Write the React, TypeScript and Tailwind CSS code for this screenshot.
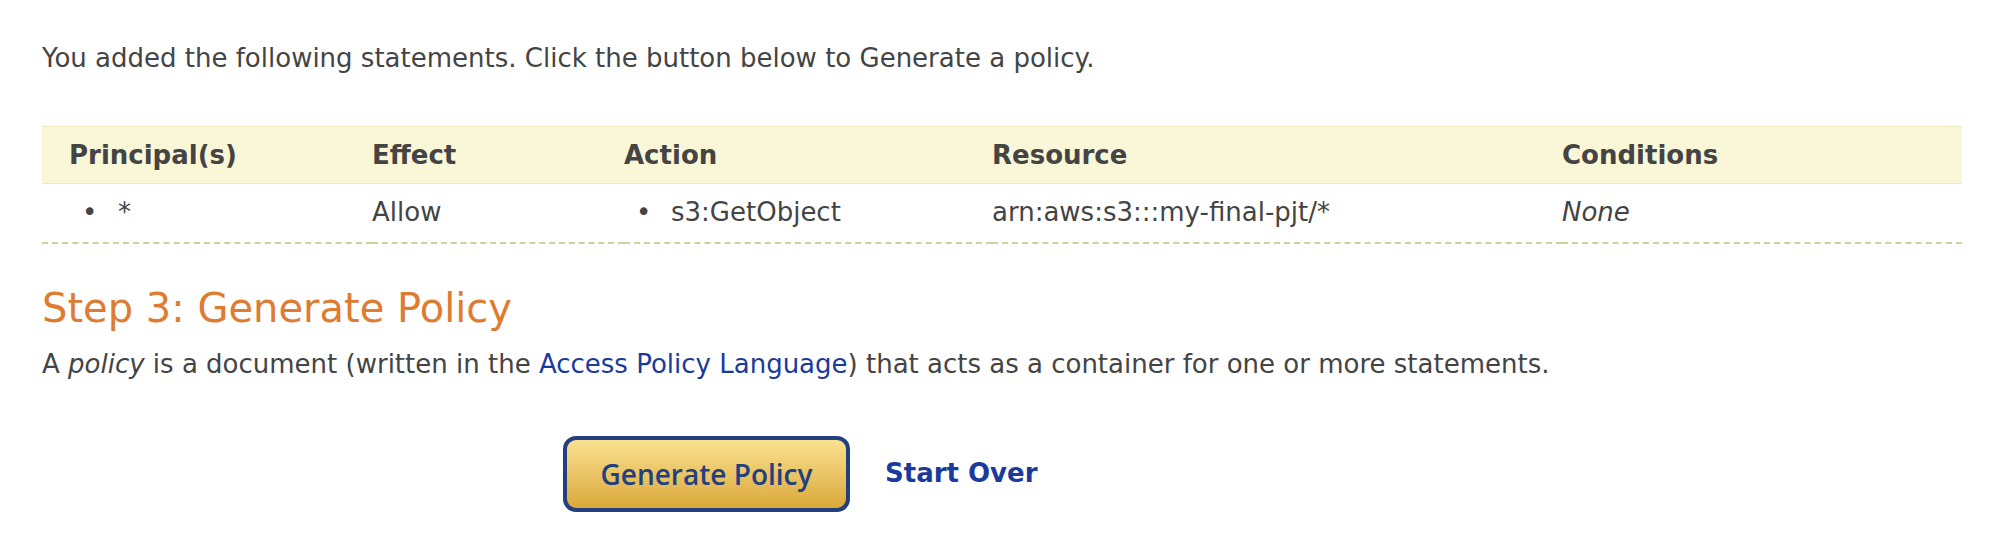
export default function App() {
  const cols = ['Principal(s)', 'Effect', 'Action', 'Resource', 'Conditions'];
  return (
    <div className="min-h-screen bg-white text-[#444] font-['DejaVu_Sans',Verdana,sans-serif] pl-[42px] pr-[34px]">
      <p className="pt-[41px] text-[26px] leading-[34px]">
        You added the following statements. Click the button below to Generate a policy.
      </p>

      <table className="mt-[51px] w-full border-collapse text-[26px]">
        <thead>
          <tr className="bg-[#faf6d8] border-y border-[#efe9c0] h-[57px]">
            {cols.map((c, i) => (
              <th
                key={c}
                className={`text-left font-bold ${i === 0 ? 'pl-[27px] w-[330px]' : ''} ${i === 1 ? 'w-[252px]' : ''} ${i === 2 ? 'w-[368px]' : ''} ${i === 3 ? 'w-[570px]' : ''}`}
              >
                {c}
              </th>
            ))}
          </tr>
        </thead>
        <tbody>
          <tr className="h-[59px] border-b-2 border-dashed border-[#cfd09c]">
            <td className="pl-[40px]">
              <span className="inline-block w-[36px]">•</span>*
            </td>
            <td>Allow</td>
            <td className="pl-[12px]">
              <span className="inline-block w-[35px]">•</span>s3:GetObject
            </td>
            <td>arn:aws:s3:::my-final-pjt/*</td>
            <td className="italic">None</td>
          </tr>
        </tbody>
      </table>

      <h2 className="mt-[40px] text-[40px] leading-[48px] text-[#de7c32]">Step 3: Generate Policy</h2>
      <p className="mt-[15px] text-[26px] leading-[34px]">
        A <em>policy</em> is a document (written in the{' '}
        <a className="text-[#1a3a9c]" href="#">Access Policy Language</a>) that acts as a container for one or more statements.
      </p>

      <div className="mt-[55px] pl-[521px] flex items-center gap-[35px] pb-[30px]">
        <button className="h-[76px] w-[287px] rounded-[13px] border-[4px] border-[#22407f] bg-gradient-to-b from-[#f9e18f] to-[#dba838] font-['Open_Sans',sans-serif] text-[28px] font-semibold text-[#22407f]">
          Generate Policy
        </button>
        <a href="#" className="text-[26px] font-bold text-[#1a3a9c]">Start Over</a>
      </div>
    </div>
  );
}
